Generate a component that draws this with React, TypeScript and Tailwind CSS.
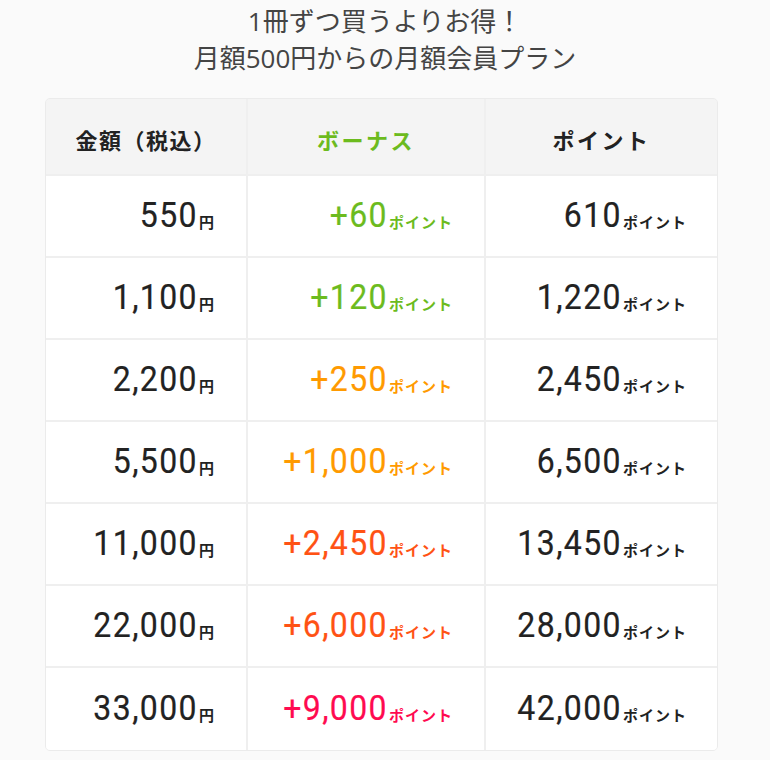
const rows = [
  { price: "550", bonus: "+60", bonusColor: "text-[#6cbb1e]", total: "610" },
  { price: "1,100", bonus: "+120", bonusColor: "text-[#6cbb1e]", total: "1,220" },
  { price: "2,200", bonus: "+250", bonusColor: "text-[#ff9a00]", total: "2,450" },
  { price: "5,500", bonus: "+1,000", bonusColor: "text-[#ff9a00]", total: "6,500" },
  { price: "11,000", bonus: "+2,450", bonusColor: "text-[#ff5214]", total: "13,450" },
  { price: "22,000", bonus: "+6,000", bonusColor: "text-[#ff5214]", total: "28,000" },
  { price: "33,000", bonus: "+9,000", bonusColor: "text-[#ff0a50]", total: "42,000" },
];

const jp = "font-['Noto_Sans_CJK_JP',sans-serif]";

const Amount = ({ value, unit }: { value: string; unit: string }) => (
  <span className="flex items-baseline">
    <span className="inline-block origin-bottom scale-y-[1.12] font-['Roboto',sans-serif] font-normal text-[32px] leading-none tracking-[1.4px] [-webkit-text-stroke:0.2px_currentColor]">
      {value}
    </span>
    <span className={`${jp} font-bold text-[15px] leading-none tracking-[1px] ml-[1px]`}>{unit}</span>
  </span>
);

export default function App() {
  return (
    <div className="min-h-[760px] w-[770px] bg-[#fafafa] pt-[3px]">
      <h2
        className={`font-['Open_Sans','Noto_Sans_CJK_JP',sans-serif] text-[26px] leading-[37px] text-[#444] text-center font-normal`}
      >
        1冊ずつ買うよりお得！
        <br />
        月額500円からの月額会員プラン
      </h2>

      <div className="mt-[21px] ml-[45px] w-[673px] rounded-[5px] border border-[#ebebeb] overflow-hidden">
        <div className="grid grid-cols-[200px_236px_231px] gap-[2px] bg-[#efefef]">
          <div className={`${jp} h-[75px] pt-[5px] bg-[#f4f4f4] flex items-center justify-center font-bold text-[22px] tracking-[1.5px] text-[#222]`}>
            金額（税込）
          </div>
          <div className={`${jp} h-[75px] pt-[5px] bg-[#f4f4f4] flex items-center justify-center font-bold text-[22px] tracking-[2.5px] text-[#6cbb1e]`}>
            ボーナス
          </div>
          <div className={`${jp} h-[75px] pt-[5px] bg-[#f4f4f4] flex items-center justify-center font-bold text-[22px] tracking-[2.5px] text-[#222]`}>
            ポイント
          </div>

          {rows.map((r, i) => (
            <>
              <div key={r.price + "a"} className={`${i === 6 ? "h-[82px]" : "h-[80px]"} pt-[2px] bg-white flex items-center justify-end pr-[31px] text-[#222]`}>
                <Amount value={r.price} unit="円" />
              </div>
              <div key={r.price + "b"} className={`${i === 6 ? "h-[82px]" : "h-[80px]"} pt-[2px] bg-white flex items-center justify-end pr-[31px] ${r.bonusColor}`}>
                <Amount value={r.bonus} unit="ポイント" />
              </div>
              <div key={r.price + "c"} className={`${i === 6 ? "h-[82px]" : "h-[80px]"} pt-[2px] bg-white flex items-center justify-end pr-[30px] text-[#222]`}>
                <Amount value={r.total} unit="ポイント" />
              </div>
            </>
          ))}
        </div>
      </div>
    </div>
  );
}
